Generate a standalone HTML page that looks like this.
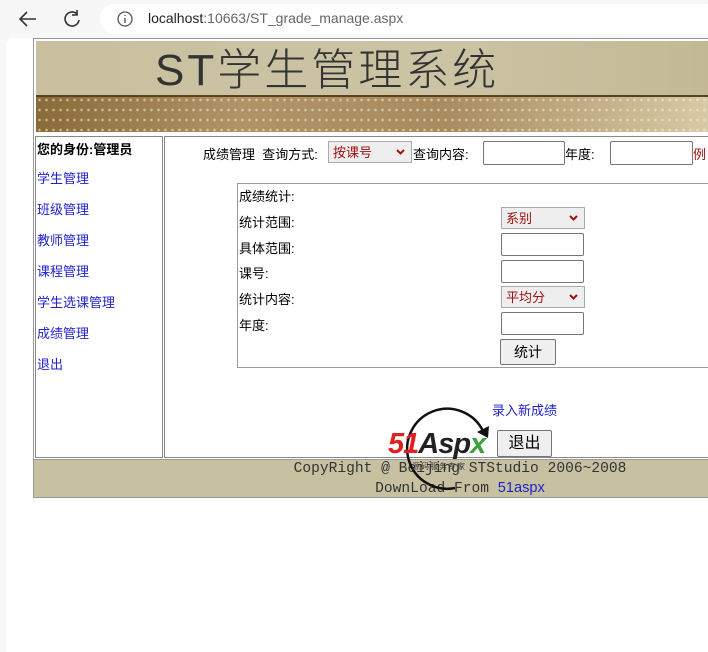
<!DOCTYPE html>
<html><head><meta charset="utf-8"><style>
*{margin:0;padding:0;box-sizing:border-box}
body{width:708px;height:652px;background:#f7f7f7;font-family:"Liberation Sans","Noto Sans CJK SC",sans-serif;font-size:13px;position:relative;overflow:hidden;color:#000}
.a{position:absolute}
.page{left:6px;top:38px;width:702px;height:614px;background:#fff;border-top-left-radius:8px}
.bar{left:100px;top:4px;width:620px;height:30px;background:#fff;border-radius:15px}
.link{color:#2222cc}
.inp{position:absolute;background:#fff;border:1px solid #767676;border-radius:2px}
.sel{position:absolute;background:#eee;border:1px solid #aaa;color:#a01010;font-size:13px;padding-left:4px}
.sel svg{position:absolute;right:6px;top:7px}
.btn{position:absolute;background:#efefef;border:1px solid #767676;border-radius:2px;text-align:center}
</style></head><body>
<div class="a bar"></div>
<svg class="a" style="left:18px;top:10px" width="20" height="18"><path d="M18 9H3M9 2L2 9l7 7" stroke="#333" stroke-width="1.6" fill="none"/></svg>
<svg class="a" style="left:62px;top:9px" width="20" height="20"><path d="M15 5A7 7 0 1 0 17 11M15 1v5h-5" stroke="#333" stroke-width="1.6" fill="none"/></svg>
<svg class="a" style="left:116px;top:10px" width="18" height="18"><circle cx="9" cy="9" r="7" stroke="#555" fill="none" stroke-width="1.3"/><path d="M9 8v5M9 5v1" stroke="#555" stroke-width="1.4"/></svg>
<div class="a" style="left:148px;top:10px;font-size:14px;color:#222">localhost<span style="color:#666">:10663/ST_grade_manage.aspx</span></div>
<div class="a page"></div>
<div class="a" style="left:33px;top:38px;width:680px;height:460px;border:1px solid #999"></div>
<div class="a" style="left:36px;top:41px;width:680px;height:55px;background:linear-gradient(90deg,#c9c0a0,#cbc3a3 60%,#c2b994)"></div>
<div class="a" style="left:155px;top:44px;font-size:44px;color:#333;letter-spacing:3px;font-weight:300;line-height:54px">ST学生管理系统</div>
<div class="a" style="left:36px;top:95px;width:680px;height:37px;background:linear-gradient(90deg,#8a6a3a,#b09468 30%,#a88c60 60%,#d8cca8);"></div>
<div class="a" style="left:36px;top:95px;width:680px;height:37px;background-image:radial-gradient(circle,rgba(255,240,210,.55) 1px,transparent 1.6px);background-size:7px 10px"></div>
<div class="a" style="left:36px;top:95px;width:680px;height:2px;background:#5a4220"></div>
<div class="a" style="left:35px;top:136px;width:128px;height:322px;border:1px solid #888"></div>
<div class="a" style="left:164px;top:136px;width:560px;height:322px;border:1px solid #888"></div>
<div class="a" style="left:37px;top:139px;font-weight:bold;font-size:13px">您的身份:管理员</div>
<div class="a link" style="left:37px;top:163px;line-height:31px">学生管理<br>班级管理<br>教师管理<br>课程管理<br>学生选课管理<br>成绩管理<br>退出</div>
<div class="a" style="left:203px;top:144px">成绩管理&nbsp; 查询方式:</div>
<div class="sel" style="left:328px;top:141px;width:84px;height:22px;line-height:21px">按课号<svg width="9" height="6"><path d="M1 1l3.5 3.5L8 1" stroke="#a01010" stroke-width="2" fill="none"/></svg></div>
<div class="a" style="left:413px;top:144px">查询内容:</div>
<div class="inp" style="left:483px;top:141px;width:82px;height:24px"></div>
<div class="a" style="left:565px;top:144px">年度:</div>
<div class="inp" style="left:610px;top:141px;width:83px;height:24px"></div>
<div class="a" style="left:693px;top:144px;color:#a01010">例</div>
<div class="a" style="left:237px;top:183px;width:480px;height:185px;border:1px solid #999"></div>
<div class="a" style="left:239px;top:184px;line-height:25.8px">成绩统计:<br>统计范围:<br>具体范围:<br>课号:<br>统计内容:<br>年度:</div>
<div class="sel" style="left:501px;top:207px;width:84px;height:22px;line-height:21px">系别<svg width="9" height="6"><path d="M1 1l3.5 3.5L8 1" stroke="#a01010" stroke-width="2" fill="none"/></svg></div>
<div class="inp" style="left:501px;top:233px;width:83px;height:23px"></div>
<div class="inp" style="left:501px;top:260px;width:83px;height:23px"></div>
<div class="sel" style="left:501px;top:286px;width:84px;height:22px;line-height:21px">平均分<svg width="9" height="6"><path d="M1 1l3.5 3.5L8 1" stroke="#a01010" stroke-width="2" fill="none"/></svg></div>
<div class="inp" style="left:501px;top:312px;width:83px;height:23px"></div>
<div class="btn" style="left:500px;top:339px;width:56px;height:26px;line-height:24px;font-size:14px">统计</div>
<div class="a link" style="left:492px;top:400px">录入新成绩</div>
<div class="btn" style="left:497px;top:430px;width:55px;height:27px;line-height:25px;font-size:16px">退出</div>
<div class="a" style="left:33px;top:459px;width:680px;height:39px;background:#c8c1a1;border:1px solid #999"></div>
<div class="a" style="left:270px;top:460px;font-family:'Liberation Mono',monospace;font-size:14.6px;color:#333;line-height:19px;text-align:center;width:380px">CopyRight @ Beijing STStudio 2006~2008<br>DownLoad From <span style="color:#2222cc;font-family:'Liberation Sans'">51aspx</span></div>
<svg class="a" style="left:395px;top:398px" width="110" height="110"><path d="M60 90A40 40 0 1 1 88 33" stroke="#111" stroke-width="2.5" fill="none"/><path d="M82 34l11 6 1-12z" fill="#111"/></svg>
<div class="a" style="left:388px;top:428px;font-size:29px;font-weight:bold;font-style:italic;color:#e02020;letter-spacing:-1px;line-height:32px">51<span style="color:#222">Asp</span><span style="color:#3aa040">x</span></div>
<div class="a" style="left:412px;top:461px;font-size:8px;color:#333;letter-spacing:1px">源码服务专家</div>
</body></html>
